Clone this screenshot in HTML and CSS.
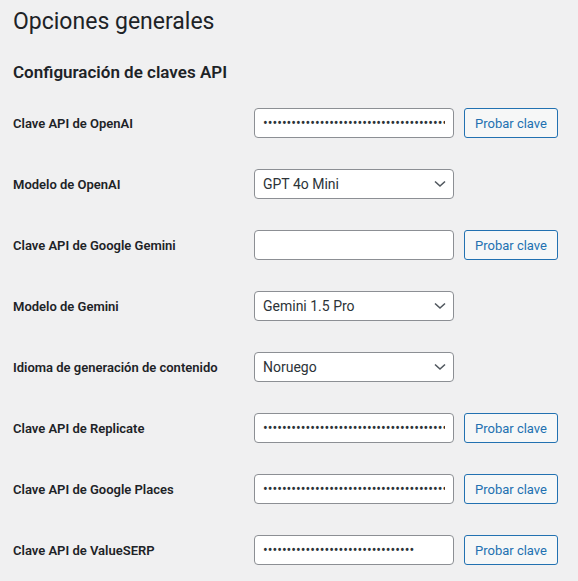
FILE: index.html
```html
<!DOCTYPE html>
<html lang="es">
<head>
    <meta charset="UTF-8">
    <title>Opciones generales</title>
    <link rel="stylesheet" href="styles.css">
</head>
<body>
    <div class="wrap">
        <h1>Opciones generales</h1>
        <h2>Configuración de claves API</h2>

        <div class="form-table">
            <label class="row-label">Clave API de OpenAI</label>
            <div class="row-field">
                <input type="password" class="text-input" value="sk-proj-abcdefghijklmnopqrstuvwxyz0123456789ABCDEFGH">
                <button class="button">Probar clave</button>
            </div>

            <label class="row-label">Modelo de OpenAI</label>
            <div class="row-field">
                <span class="select-wrap">
                    <select class="select-input">
                        <option>GPT 4o Mini</option>
                    </select>
                    <svg class="chevron" width="12" height="8" viewBox="0 0 12 8"><path d="M1 1.5 L6 6 L11 1.5" fill="none" stroke="#50575e" stroke-width="1.6"/></svg>
                </span>
            </div>

            <label class="row-label">Clave API de Google Gemini</label>
            <div class="row-field">
                <input type="password" class="text-input" value="">
                <button class="button">Probar clave</button>
            </div>

            <label class="row-label">Modelo de Gemini</label>
            <div class="row-field">
                <span class="select-wrap">
                    <select class="select-input">
                        <option>Gemini 1.5 Pro</option>
                    </select>
                    <svg class="chevron" width="12" height="8" viewBox="0 0 12 8"><path d="M1 1.5 L6 6 L11 1.5" fill="none" stroke="#50575e" stroke-width="1.6"/></svg>
                </span>
            </div>

            <label class="row-label">Idioma de generación de contenido</label>
            <div class="row-field">
                <span class="select-wrap">
                    <select class="select-input">
                        <option>Noruego</option>
                    </select>
                    <svg class="chevron" width="12" height="8" viewBox="0 0 12 8"><path d="M1 1.5 L6 6 L11 1.5" fill="none" stroke="#50575e" stroke-width="1.6"/></svg>
                </span>
            </div>

            <label class="row-label">Clave API de Replicate</label>
            <div class="row-field">
                <input type="password" class="text-input" value="r8_abcdefghijklmnopqrstuvwxyz0123456789ABCDEFGH">
                <button class="button">Probar clave</button>
            </div>

            <label class="row-label">Clave API de Google Places</label>
            <div class="row-field">
                <input type="password" class="text-input" value="AIzaSyabcdefghijklmnopqrstuvwxyz0123456789ABCD">
                <button class="button">Probar clave</button>
            </div>

            <label class="row-label">Clave API de ValueSERP</label>
            <div class="row-field">
                <input type="password" class="text-input" value="ABCDEF0123456789ABCDEF0123456789">
                <button class="button">Probar clave</button>
            </div>
        </div>
    </div>
</body>
</html>
```

FILE: styles.css
```css
body {
    margin: 0;
    background-color: #f0f0f1;
    color: #1d2327;
    font-family: Roboto, "Noto Sans", sans-serif;
    font-size: 13px;
}

.wrap {
    padding: 0 13px;
}

h1 {
    margin: 0;
    padding: 7px 0 0;
    font-size: 23px;
    font-weight: 400;
    line-height: 1.3;
}

h2 {
    margin: 0;
    padding-top: 24px;
    font-size: 17px;
    font-weight: 600;
    line-height: 1.3;
}

.form-table {
    display: grid;
    grid-template-columns: 241px 1fr;
    grid-auto-rows: 61px;
    margin-top: 10px;
}

.row-label {
    display: flex;
    align-items: center;
    font-size: 13px;
    font-weight: 600;
    color: #1d2327;
}

.row-field {
    display: flex;
    align-items: center;
    gap: 10px;
}

.text-input,
.select-input {
    box-sizing: border-box;
    width: 200px;
    height: 30px;
    margin: 0;
    padding: 0 8px;
    border: 1px solid #8c8f94;
    border-radius: 4px;
    background-color: #fff;
    color: #2c3338;
    font-family: Roboto, "Noto Sans", sans-serif;
    font-size: 14px;
}

.select-wrap {
    position: relative;
    display: inline-block;
}

.select-input {
    display: block;
    appearance: none;
    -webkit-appearance: none;
    padding-right: 24px;
}

.chevron {
    position: absolute;
    right: 8px;
    top: 11px;
    pointer-events: none;
}

.button {
    box-sizing: border-box;
    height: 30px;
    padding: 0 10px;
    border: 1px solid #2271b1;
    border-radius: 3px;
    background-color: #f6f7f7;
    color: #2271b1;
    font-family: Roboto, "Noto Sans", sans-serif;
    font-size: 13px;
    cursor: pointer;
}
```
